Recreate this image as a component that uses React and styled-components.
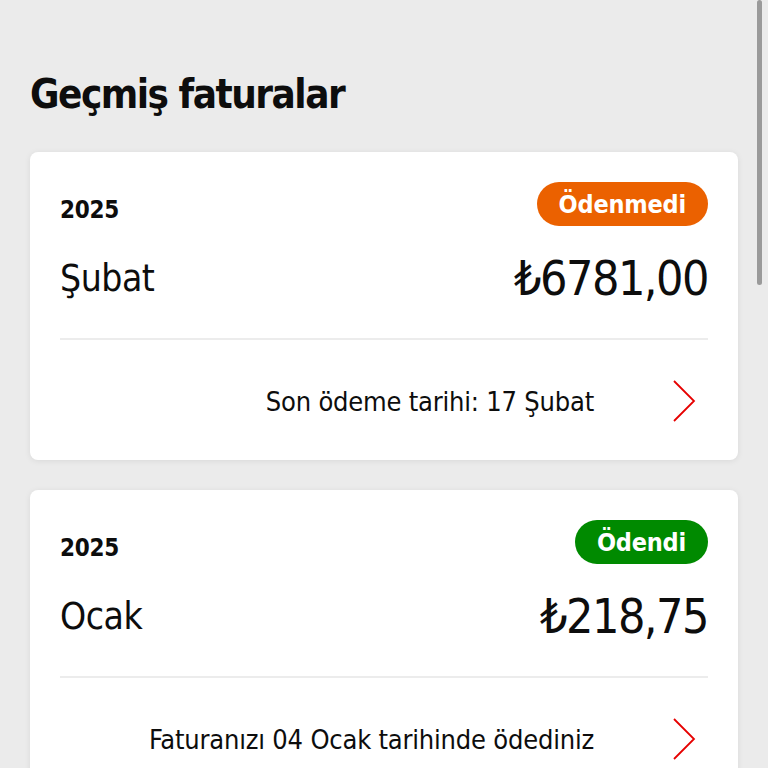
import React from "react";
import styled, { createGlobalStyle } from "styled-components";

const Global = createGlobalStyle`
  html, body { margin: 0; padding: 0; background: #ebebeb; }
  body { font-family: "DejaVu Sans Condensed", "DejaVu Sans", "Liberation Sans", sans-serif; color: #0d0d0d; }
  * { box-sizing: border-box; }
`;

const Page = styled.div`
  min-height: 768px;
  padding: 66px 30px 30px 30px;
  display: flex;
  flex-direction: column;
  gap: 30px;
`;

const Title = styled.h1`
  margin: 0;
  font-size: 40px;
  line-height: 56px;
  font-weight: 700;
  letter-spacing: -1.5px;
`;

const List = styled.div`
  display: flex;
  flex-direction: column;
  gap: 30px;
`;

const Card = styled.div`
  background: #fff;
  border-radius: 8px;
  box-shadow: 0 1px 6px rgba(0, 0, 0, 0.08);
  padding: 30px 30px 28px 30px;
  display: flex;
  flex-direction: column;
`;

const HeaderRow = styled.div`
  display: flex;
  align-items: center;
  justify-content: space-between;
  height: 44px;
`;

const Year = styled.span`
  font-size: 24px;
  font-weight: 700;
  padding-top: 11px;
  letter-spacing: -0.3px;
`;

const Badge = styled.span`
  height: 44px;
  padding: 0 22px;
  border-radius: 22px;
  background: ${(p) => (p.$paid ? "#008a00" : "#eb6100")};
  color: #fff;
  font-size: 25px;
  font-weight: 700;
  letter-spacing: -0.2px;
  display: flex;
  align-items: center;
`;

const AmountRow = styled.div`
  display: flex;
  align-items: center;
  justify-content: space-between;
  height: 60px;
  margin-top: 22px;
`;

const Month = styled.span`
  font-size: 37px;
  font-weight: 400;
  letter-spacing: -0.5px;
`;

const Amount = styled.span`
  font-size: 48px;
  font-weight: 400;
  letter-spacing: -1.5px;
`;

const Divider = styled.div`
  height: 2px;
  background: #ececec;
  margin-top: 30px;
`;

const Footer = styled.div`
  display: flex;
  align-items: center;
  justify-content: flex-end;
  height: 62px;
  margin-top: 30px;
  gap: 78px;
`;

const FooterText = styled.span`
  font-size: 27px;
  letter-spacing: -0.2px;
`;

const Chevron = styled.svg`
  width: 24px;
  height: 42px;
  margin-right: 12px;
`;

const ScrollThumb = styled.div`
  position: fixed;
  top: 0;
  left: 757px;
  width: 5px;
  height: 285px;
  border-radius: 3px;
  background: #9a9a9a;
`;

const bills = [
  { year: "2025", month: "Şubat", amount: "₺6781,00", paid: false, status: "Ödenmedi", note: "Son ödeme tarihi: 17 Şubat" },
  { year: "2025", month: "Ocak", amount: "₺218,75", paid: true, status: "Ödendi", note: "Faturanızı 04 Ocak tarihinde ödediniz" },
];

export default function App() {
  return (
    <>
      <Global />
      <Page>
        <Title>Geçmiş faturalar</Title>
        <List>
          {bills.map((b) => (
            <Card key={b.month}>
              <HeaderRow>
                <Year>{b.year}</Year>
                <Badge $paid={b.paid}>{b.status}</Badge>
              </HeaderRow>
              <AmountRow>
                <Month>{b.month}</Month>
                <Amount>{b.amount}</Amount>
              </AmountRow>
              <Divider />
              <Footer>
                <FooterText>{b.note}</FooterText>
                <Chevron viewBox="0 0 24 42">
                  <polyline points="2,1 22,21 2,41" fill="none" stroke="#e60000" strokeWidth="1.8" />
                </Chevron>
              </Footer>
            </Card>
          ))}
        </List>
      </Page>
      <ScrollThumb />
    </>
  );
}
